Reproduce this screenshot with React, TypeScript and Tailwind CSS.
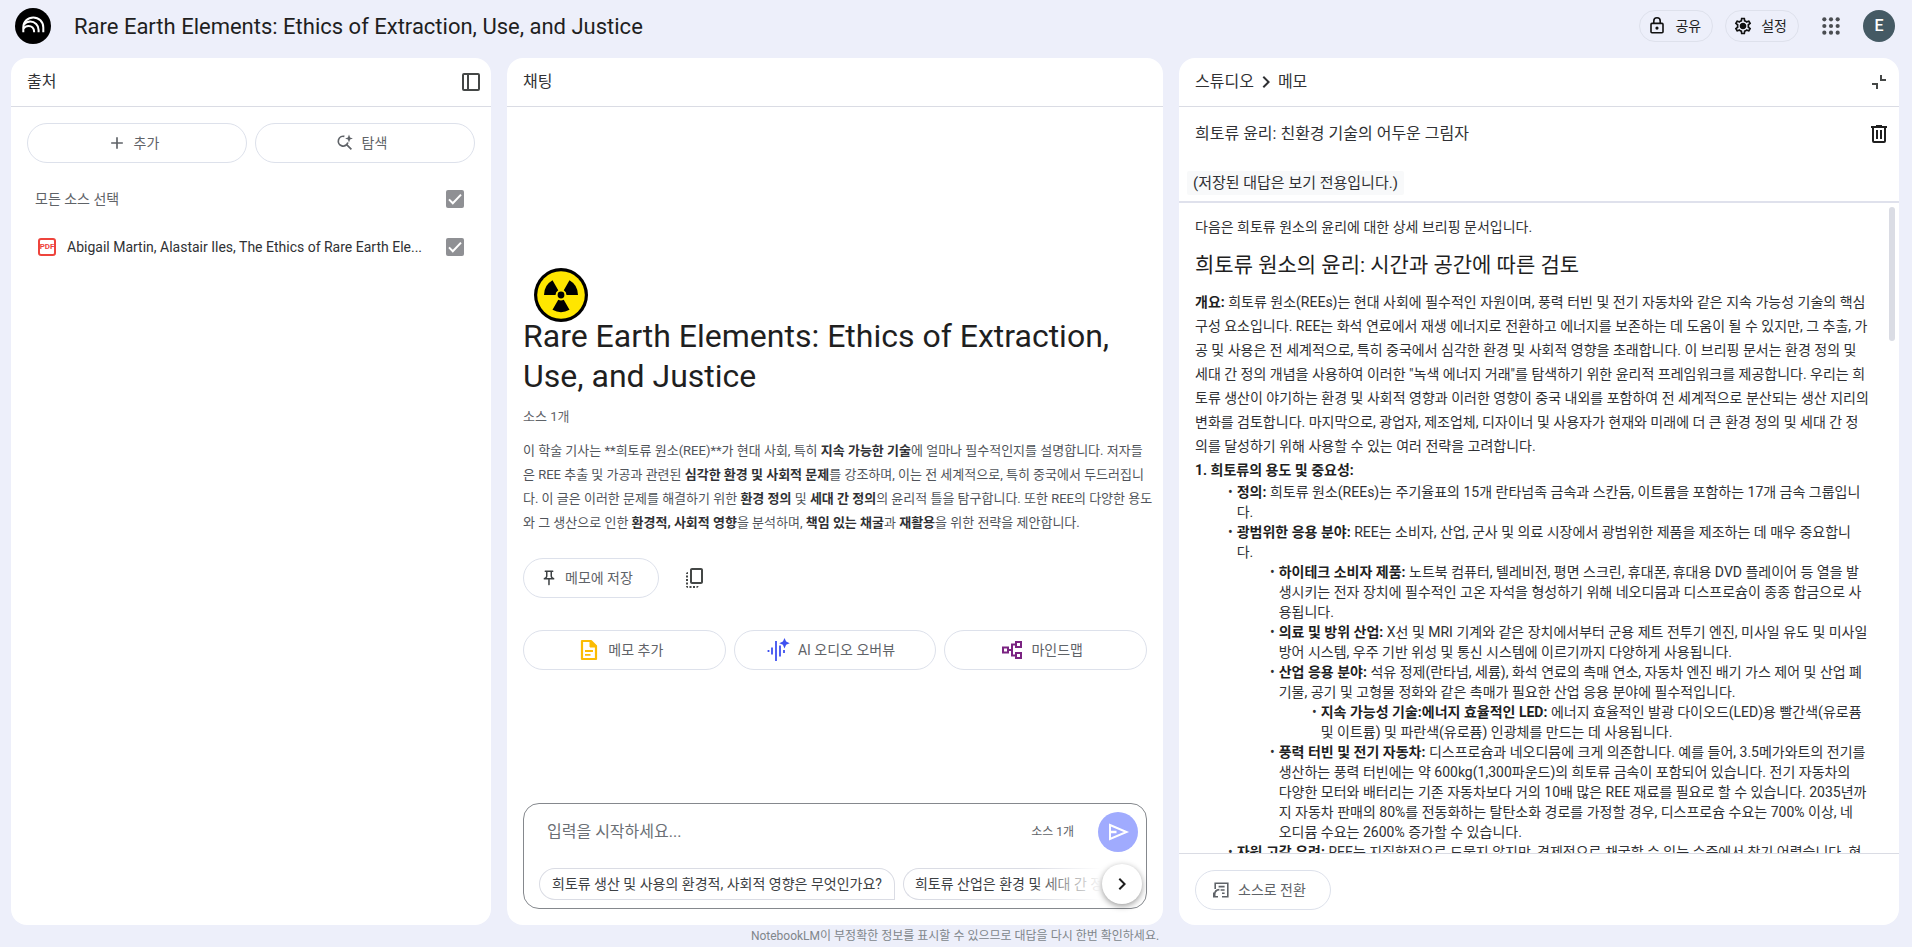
import type { ReactNode } from "react";
import {
  MdAdd,
  MdChevronRight,
  MdCopyAll,
  MdOutlinePushPin,
  MdOutlineSettings,
} from "react-icons/md";

function LogoMark() {
  return (
    <svg viewBox="0 0 36 36" className="size-9 shrink-0" aria-hidden="true">
      <circle cx="18" cy="18" r="18" fill="#000" />
      <g fill="none" stroke="#fff" strokeWidth="2" strokeLinecap="butt">
        <path d="M8.3 24.2v-4.8a10 10 0 0 1 20 0v4.8" />
        <path d="M8.8 16.6c1.6-1.9 3.9-3 6.5-3 4.6 0 8.3 3.7 8.3 8.3v2.3" />
        <path d="M8.4 20.6c1.2-1.7 2.9-2.7 5.1-2.7 3.2 0 5.6 2.5 5.6 5.7v.6" />
      </g>
    </svg>
  );
}

function LockIcon() {
  return (
    <svg viewBox="0 0 20 20" className="size-5" aria-hidden="true">
      <rect x="4" y="7.4" width="12" height="9.4" rx="1" fill="none" stroke="#111" strokeWidth="1.6" />
      <path d="M6.8 7.2V5a3.2 3.2 0 0 1 6.4 0v2.2" fill="none" stroke="#111" strokeWidth="1.6" />
      <circle cx="10" cy="12.1" r="1.6" fill="#111" />
    </svg>
  );
}

function GearIcon() {
  return (
    <svg viewBox="0 0 20 20" className="size-5" aria-hidden="true">
      <MdOutlineSettings size={20} color="#111" />
      <circle cx="10" cy="10" r="2.8" fill="#111" />
    </svg>
  );
}

function AppsIcon() {
  const steps = [4, 12, 20];
  return (
    <svg viewBox="0 0 24 24" className="size-5" aria-hidden="true" fill="#4a4d51">
      {steps.map((y) => steps.map((x) => <circle key={`${x}-${y}`} cx={x} cy={y} r="2.5" />))}
    </svg>
  );
}

function DockIcon() {
  return (
    <svg viewBox="0 0 24 24" className="size-6" aria-hidden="true" fill="none" stroke="#444746" strokeWidth="2">
      <rect x="4" y="4" width="16" height="16" rx="1" />
      <path d="M9 4v16" />
    </svg>
  );
}

function SearchSparkIcon() {
  return (
    <svg viewBox="0 0 20 20" className="size-5" aria-hidden="true">
      <path
        d="M9.4 3.4A4.9 4.9 0 1 0 12.9 9.6M11.4 11.4l5 5"
        fill="none"
        stroke="#5f6368"
        strokeWidth="1.7"
      />
      <path d="M14 1.6l1.1 2.8 2.8 1.1-2.8 1.1L14 9.4l-1.1-2.8-2.8-1.1 2.8-1.1z" fill="#5f6368" />
    </svg>
  );
}

function CollapseIcon() {
  return (
    <svg viewBox="0 0 24 24" className="size-6" aria-hidden="true" fill="none" stroke="#444746" strokeWidth="2">
      <path d="M14 5v5h5" />
      <path d="M5 14h5v5" />
    </svg>
  );
}

function TrashIcon() {
  return (
    <svg viewBox="0 0 24 24" className="size-6" aria-hidden="true" fill="none" stroke="#1f1f1f" strokeWidth="2">
      <path d="M4 5h16M9 4h6" />
      <path d="M6 5v14a1 1 0 0 0 1 1h10a1 1 0 0 0 1-1V5" />
      <path d="M10 8v9M14 8v9" />
    </svg>
  );
}

function RadiationEmoji() {
  const blade = "M5.5 0H17A17 17 0 0 0 8.5-14.72L2.75-4.76A5.5 5.5 0 0 1 5.5 0z";
  return (
    <svg viewBox="-27 -27 54 54" className="ml-[11px] size-[54px]" role="img" aria-label="Radioactive">
      <circle r="27" fill="#000" />
      <circle r="23.8" fill="#ffe600" />
      <circle r="3.4" fill="#000" />
      <path d={blade} />
      <path d={blade} transform="rotate(120)" />
      <path d={blade} transform="rotate(-120)" />
    </svg>
  );
}

function NoteIcon() {
  return (
    <svg viewBox="0 0 24 24" className="size-6" aria-hidden="true" fill="none" stroke="#fbbc04">
      <path d="M5 3h9l5 5v13H5z" strokeWidth="2.2" strokeLinejoin="round" />
      <path d="M13 3v6h6z" fill="#fbbc04" strokeWidth="1" />
      <path d="M8 13h8M8 16.8h5.5" strokeWidth="1.8" />
    </svg>
  );
}

function AudioIcon() {
  return (
    <svg viewBox="0 0 24 24" className="size-6" aria-hidden="true">
      <path
        d="M1.5 12v2M5 9.5v7M9 3v20M13 7.5v11M17 12v3"
        fill="none"
        stroke="#3f51f0"
        strokeWidth="1.8"
      />
      <path d="M17.5 0l1.6 3.6 3.6 1.6-3.6 1.6-1.6 3.6-1.6-3.6-3.6-1.6 3.6-1.6z" fill="#3f51f0" />
    </svg>
  );
}

function MindMapIcon() {
  return (
    <svg viewBox="0 0 24 24" className="size-6" aria-hidden="true" fill="none" stroke="#7b2482" strokeWidth="2">
      <rect x="3" y="9.5" width="5" height="5" />
      <rect x="16" y="4" width="5" height="5" />
      <rect x="16" y="15" width="5" height="5" />
      <path d="M8 12h4M16 6.5h-4v11h4" />
    </svg>
  );
}

function ConvertIcon() {
  return (
    <svg viewBox="0 0 20 20" className="size-5" aria-hidden="true" fill="none" stroke="#5f6368" strokeWidth="1.6">
      <path d="M4.2 9V3.2h12.6v13.6H11" />
      <path d="M7.6 6.6h6M9.6 10h4M11 13.2h2.6" />
      <path d="M8.4 9.6c-3 .2-4.7 2-4.7 4.8v1.8" />
      <path d="M2.8 12.6v4.2H7" />
    </svg>
  );
}

function SendIcon() {
  return (
    <svg viewBox="0 0 24 24" className="size-6" aria-hidden="true" fill="none" stroke="#fff" strokeWidth="2">
      <path d="M4 5l16.5 7L4 19z" />
      <path d="M4 12h6.5" strokeWidth="2.4" />
    </svg>
  );
}

function Checkbox({ id }: { id: string }) {
  return (
    <span className="relative flex size-[18px] shrink-0">
      <input id={id} type="checkbox" defaultChecked className="size-[18px] appearance-none rounded-[2px] bg-[#8f9094]" />
      <svg viewBox="0 0 18 18" className="pointer-events-none absolute inset-0" aria-hidden="true">
        <path d="M3 9.4l3.8 3.8L15 4.6" fill="none" stroke="#fff" strokeWidth="2" />
      </svg>
    </span>
  );
}

function PillButton({
  icon,
  children,
  className = "pr-2",
}: {
  icon: ReactNode;
  children: ReactNode;
  className?: string;
}) {
  return (
    <button
      type="button"
      className={`flex h-10 items-center justify-center gap-[7px] rounded-full border border-[#dde1eb] text-sm text-[#5f6368] ${className}`}
    >
      {icon}
      <span>{children}</span>
    </button>
  );
}

function TopButton({ icon, children }: { icon: ReactNode; children: ReactNode }) {
  return (
    <button
      type="button"
      className="flex h-8 items-center gap-2 rounded-full border border-[#dee1ec] pr-[11px] pl-[7px] text-sm text-[#1f1f1f]"
    >
      {icon}
      <span>{children}</span>
    </button>
  );
}

function Panel({ header, children }: { header: ReactNode; children: ReactNode }) {
  return (
    <section className="flex min-h-0 min-w-0 flex-col overflow-hidden rounded-2xl bg-white">
      <header className="flex h-[49px] shrink-0 items-center justify-between border-b border-[#dadce4] pr-2 pl-4 text-base text-[#303134]">
        {header}
      </header>
      {children}
    </section>
  );
}

function Item({ title, text, children }: { title: string; text: string; children?: ReactNode }) {
  return (
    <li>
      <div className="flex gap-1">
        <span aria-hidden="true">•</span>
        <p className="whitespace-pre-line">
          <b>{title}</b> {text}
        </p>
      </div>
      {children}
    </li>
  );
}

function SourcesPanel() {
  return (
    <Panel
      header={
        <>
          <h2>출처</h2>
          <button type="button" aria-label="출처 패널 접기">
            <DockIcon />
          </button>
        </>
      }
    >
      <div className="grid grid-cols-2 gap-2 px-4 pt-4">
        <PillButton icon={<MdAdd className="size-5" />}>추가</PillButton>
        <PillButton icon={<SearchSparkIcon />}>탐색</PillButton>
      </div>
      <div className="mt-4 flex h-10 items-center justify-between pr-[27px] pl-6 text-sm text-[#5f6368]">
        <label htmlFor="all-sources">모든 소스 선택</label>
        <Checkbox id="all-sources" />
      </div>
      <div className="mt-2 flex h-10 items-center pr-[27px] pl-[27px] text-sm text-[#303134]">
        <span className="flex size-[18px] shrink-0 items-center justify-center rounded-[3px] border-2 border-[#ee443c] text-[8px] leading-none font-bold text-[#ee443c]">
          PDF
        </span>
        <label htmlFor="source-1" className="ml-[11px] min-w-0 flex-1 truncate">
          Abigail Martin, Alastair Iles, The Ethics of Rare Earth Ele...
        </label>
        <Checkbox id="source-1" />
      </div>
    </Panel>
  );
}

function ChatPanel() {
  return (
    <Panel header={<h2>채팅</h2>}>
      <div className="flex min-h-0 flex-1 flex-col justify-end px-4 pb-[133px]">
        <RadiationEmoji />
        <h1 className="-mt-[6px] text-[32px] leading-10 text-[#1f1f1f]">
          Rare Earth Elements: Ethics of Extraction, Use, and Justice
        </h1>
        <p className="mt-[11px] text-[13px] leading-5 text-[#5f6368]">소스 1개</p>
        <p className="mt-3 -mr-3 text-[13px] leading-6 text-[#50545a] [&_b]:text-[#303134]">
          이 학술 기사는 **희토류 원소(REE)**가 현대 사회, 특히 <b>지속 가능한 기술</b>에 얼마나 필수적인지를
          설명합니다. 저자들
          <br />은 REE 추출 및 가공과 관련된 <b>심각한 환경 및 사회적 문제</b>를 강조하며, 이는 전 세계적으로,
          특히 중국에서 두드러집니
          <br />
          다. 이 글은 이러한 문제를 해결하기 위한 <b>환경 정의</b> 및 <b>세대 간 정의</b>의 윤리적 틀을
          탐구합니다. 또한 REE의 다양한 용도
          <br />와 그 생산으로 인한 <b>환경적, 사회적 영향</b>을 분석하며, <b>책임 있는 채굴</b>과 <b>재활용</b>을
          위한 전략을 제안합니다.
        </p>
        <div className="mt-[23px] flex items-center gap-6">
          <PillButton className="pr-[25px] pl-4" icon={<MdOutlinePushPin className="size-[18px] text-[#3c4043]" />}>
            메모에 저장
          </PillButton>
          <button type="button" aria-label="복사" className="text-[#444746]">
            <MdCopyAll className="size-6" />
          </button>
        </div>
        <div className="mt-8 grid grid-cols-3 gap-2">
          <PillButton icon={<NoteIcon />}>메모 추가</PillButton>
          <PillButton icon={<AudioIcon />}>AI 오디오 오버뷰</PillButton>
          <PillButton icon={<MindMapIcon />}>마인드맵</PillButton>
        </div>
      </div>
      <div className="relative mx-4 mb-4 shrink-0 rounded-2xl border border-[#85888d] pb-2">
        <div className="flex h-14 items-center pr-2 pl-[23px]">
          <input
            type="text"
            aria-label="질문 입력"
            placeholder="입력을 시작하세요..."
            className="min-w-0 flex-1 text-base outline-none placeholder:text-[#6b6f75]"
          />
          <span className="text-xs text-[#5f6368]">소스 1개</span>
          <button
            type="button"
            aria-label="보내기"
            className="ml-6 flex size-10 items-center justify-center rounded-full bg-[#a0abfe]"
          >
            <SendIcon />
          </button>
        </div>
        <div className="relative mt-2 ml-[15px] flex gap-2 overflow-hidden rounded-br-2xl text-sm whitespace-nowrap text-[#3c4043]">
          <button type="button" className="h-8 shrink-0 rounded-full rounded-br-[4px] border border-[#dadce4] px-3">
            희토류 생산 및 사용의 환경적, 사회적 영향은 무엇인가요?
          </button>
          <button
            type="button"
            className="h-8 w-[226px] shrink-0 rounded-l-full border border-r-0 border-[#dadce4] pl-[11px] text-left"
          >
            희토류 산업은 환경 및 세대 간 정
          </button>
          <div className="pointer-events-none absolute inset-y-0 right-0 w-[112px] bg-linear-to-r from-white/0 to-white to-60%" />
        </div>
        <button
          type="button"
          aria-label="다음 질문"
          className="absolute right-1 bottom-1 flex size-10 items-center justify-center rounded-full bg-white text-[#1f1f1f] shadow-[0_2px_6px_rgba(0,0,0,0.4)]"
        >
          <MdChevronRight className="size-6" />
        </button>
      </div>
    </Panel>
  );
}

function StudioPanel() {
  return (
    <Panel
      header={
        <>
          <nav className="flex items-center">
            <a href="#studio">스튜디오</a>
            <MdChevronRight className="size-6" aria-hidden="true" />
            <span>메모</span>
          </nav>
          <button type="button" aria-label="접기">
            <CollapseIcon />
          </button>
        </>
      }
    >
      <div className="shrink-0 border-b-2 border-[#dfe1ec] pb-[6px]">
        <div className="flex h-[54px] items-center justify-between pr-2 pl-4 text-base text-[#303134]">
          <h2>희토류 윤리: 친환경 기술의 어두운 그림자</h2>
          <button type="button" aria-label="메모 삭제">
            <TrashIcon />
          </button>
        </div>
        <p className="mt-[10px] ml-2 w-fit rounded-[2px] bg-[#f8f9fa] px-[6px] text-[15px] leading-6 text-[#303134]">
          (저장된 대답은 보기 전용입니다.)
        </p>
      </div>
      <div className="flex min-h-0 flex-1">
        <article className="min-w-0 flex-1 overflow-hidden pt-3 pl-4 text-sm leading-6 text-[#303134] [&_b]:text-[#1f1f1f]">
          <p>다음은 희토류 원소의 윤리에 대한 상세 브리핑 문서입니다.</p>
          <h3 className="mt-3 text-[21px] leading-7 text-[#1f1f1f]">희토류 원소의 윤리: 시간과 공간에 따른 검토</h3>
          <p className="mt-[11px]">
            <b>개요:</b> 희토류 원소(REEs)는 현대 사회에 필수적인 자원이며, 풍력 터빈 및 전기 자동차와 같은 지속
            가능성 기술의 핵심 구성 요소입니다. REE는 화석 연료에서 재생 에너지로 전환하고 에너지를 보존하는 데
            도움이 될 수 있지만, 그 추출, 가공 및 사용은 전 세계적으로, 특히 중국에서 심각한 환경 및 사회적 영향을
            초래합니다. 이 브리핑 문서는 환경 정의 및 세대 간 정의 개념을 사용하여 이러한 "녹색 에너지 거래"를
            탐색하기 위한 윤리적 프레임워크를 제공합니다. 우리는 희토류 생산이 야기하는 환경 및 사회적 영향과
            이러한 영향이 중국 내외를 포함하여 전 세계적으로 분산되는 생산 지리의 변화를 검토합니다. 마지막으로,
            광업자, 제조업체, 디자이너 및 사용자가 현재와 미래에 더 큰 환경 정의 및 세대 간 정의를 달성하기 위해
            사용할 수 있는 여러 전략을 고려합니다.
          </p>
          <h4>
            <b>1. 희토류의 용도 및 중요성:</b>
          </h4>
          <ul className="pl-[33px] leading-5">
            <Item
              title="정의:"
              text="희토류 원소(REEs)는 주기율표의 15개 란타넘족 금속과 스칸듐, 이트륨을 포함하는 17개 금속 그룹입니다."
            />
            <Item
              title="광범위한 응용 분야:"
              text={"REE는 소비자, 산업, 군사 및 의료 시장에서 광범위한 제품을 제조하는 데 매우 중요합니\n다."}
            >
              <ul className="pl-[42px]">
                <Item
                  title="하이테크 소비자 제품:"
                  text="노트북 컴퓨터, 텔레비전, 평면 스크린, 휴대폰, 휴대용 DVD 플레이어 등 열을 발생시키는 전자 장치에 필수적인 고온 자석을 형성하기 위해 네오디뮴과 디스프로슘이 종종 합금으로 사용됩니다."
                />
                <Item
                  title="의료 및 방위 산업:"
                  text="X선 및 MRI 기계와 같은 장치에서부터 군용 제트 전투기 엔진, 미사일 유도 및 미사일 방어 시스템, 우주 기반 위성 및 통신 시스템에 이르기까지 다양하게 사용됩니다."
                />
                <Item
                  title="산업 응용 분야:"
                  text="석유 정제(란타넘, 세륨), 화석 연료의 촉매 연소, 자동차 엔진 배기 가스 제어 및 산업 폐기물, 공기 및 고형물 정화와 같은 촉매가 필요한 산업 응용 분야에 필수적입니다."
                >
                  <ul className="pl-[42px]">
                    <Item
                      title="지속 가능성 기술:에너지 효율적인 LED:"
                      text="에너지 효율적인 발광 다이오드(LED)용 빨간색(유로퓸 및 이트륨) 및 파란색(유로퓸) 인광체를 만드는 데 사용됩니다."
                    />
                  </ul>
                </Item>
                <Item
                  title="풍력 터빈 및 전기 자동차:"
                  text={
                    "디스프로슘과 네오디뮴에 크게 의존합니다. 예를 들어, 3.5메가와트의 전기를 생산하는 풍력 터빈에는 약 600kg(1,300파운드)의 희토류 금속이 포함되어 있습니다. 전기 자동차의\n다양한 모터와 배터리는 기존 자동차보다 거의 10배 많은 REE 재료를 필요로 할 수 있습니다. 2035년까지 자동차 판매의 80%를 전동화하는 탈탄소화 경로를 가정할 경우, 디스프로슘 수요는 700% 이상, 네\n오디뮴 수요는 2600% 증가할 수 있습니다."
                  }
                />
              </ul>
            </Item>
            <Item
              title="자원 고갈 우려:"
              text="REE는 지질학적으로 드물지 않지만, 경제적으로 채굴할 수 있는 수준에서 찾기 어렵습니다. 현"
            />
          </ul>
        </article>
        <div className="w-7 shrink-0 pt-1 pr-1 pl-[18px]">
          <div className="h-[134px] w-[6px] rounded-full bg-[#dadce4]" />
        </div>
      </div>
      <div className="shrink-0 border-t border-[#dadce4] px-4 pt-4 pb-[15px]">
        <PillButton className="pr-6 pl-[15px]" icon={<ConvertIcon />}>
          소스로 전환
        </PillButton>
      </div>
    </Panel>
  );
}

export default function App() {
  return (
    <div
      lang="ko"
      className="flex h-screen flex-col overflow-hidden bg-[#edeffa] pr-[13px] pl-[11px] font-[Roboto,'Noto_Sans_CJK_KR',sans-serif]"
    >
      <header className="mb-[6px] flex h-[52px] shrink-0 items-center px-1">
        <LogoMark />
        <div className="ml-[23px] flex-1 text-[22px] text-[#1f1f1f]">
          Rare Earth Elements: Ethics of Extraction, Use, and Justice
        </div>
        <div className="flex items-center gap-3">
          <TopButton icon={<LockIcon />}>공유</TopButton>
          <TopButton icon={<GearIcon />}>설정</TopButton>
        </div>
        <button type="button" aria-label="Google 앱" className="ml-[22px]">
          <AppsIcon />
        </button>
        <button
          type="button"
          aria-label="Google 계정"
          className="ml-[22px] flex size-8 items-center justify-center rounded-full bg-[#455a64] text-base font-medium text-white"
        >
          E
        </button>
      </header>
      <main className="grid min-h-0 flex-1 grid-cols-[480fr_656fr_720fr] gap-4">
        <SourcesPanel />
        <ChatPanel />
        <StudioPanel />
      </main>
      <footer className="h-[22px] shrink-0 text-center text-xs leading-[22px] text-[#80868b]">
        NotebookLM이 부정확한 정보를 표시할 수 있으므로 대답을 다시 한번 확인하세요.
      </footer>
    </div>
  );
}
